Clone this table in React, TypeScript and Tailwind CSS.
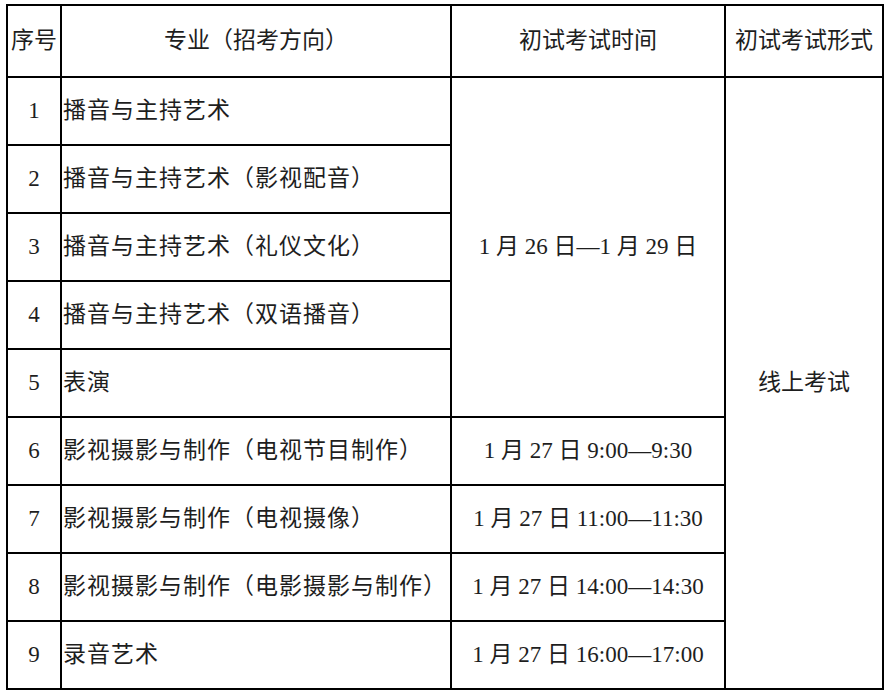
const rows: { n: number; name: string; time?: string }[] = [
  { n: 1, name: "播音与主持艺术" },
  { n: 2, name: "播音与主持艺术（影视配音）" },
  { n: 3, name: "播音与主持艺术（礼仪文化）" },
  { n: 4, name: "播音与主持艺术（双语播音）" },
  { n: 5, name: "表演" },
  { n: 6, name: "影视摄影与制作（电视节目制作）", time: "1 月 27 日 9:00—9:30" },
  { n: 7, name: "影视摄影与制作（电视摄像）", time: "1 月 27 日 11:00—11:30" },
  { n: 8, name: "影视摄影与制作（电影摄影与制作）", time: "1 月 27 日 14:00—14:30" },
  { n: 9, name: "录音艺术", time: "1 月 27 日 16:00—17:00" },
];

export default function App() {
  return (
    <div className="h-[696px] w-[887px] bg-white pl-[6px] pt-[4px] font-['Liberation_Serif','Noto_Sans_CJK_SC',serif] text-[#1e1e1e]">
      <table className="w-[876px] table-fixed border-collapse">
        <colgroup>
          <col className="w-[54px]" />
          <col className="w-[390px]" />
          <col className="w-[274px]" />
          <col className="w-[158px]" />
        </colgroup>
        <thead>
          <tr className="h-[72px] text-[23px]">
            <th className="border-2 border-black p-0 font-normal">序号</th>
            <th className="border-2 border-black p-0 font-normal">专业（招考方向）</th>
            <th className="border-2 border-black p-0 font-normal">初试考试时间</th>
            <th className="border-2 border-black p-0 font-normal">初试考试形式</th>
          </tr>
        </thead>
        <tbody>
          {rows.map((r, i) => (
            <tr key={r.n} className="h-[68px] text-[23px]">
              <td className="border-2 border-black p-0 pt-[1px] text-center">{r.n}</td>
              <td className="border-2 border-black pb-0 pt-[1px] pl-[1px] pr-0 tracking-[1px] whitespace-nowrap">{r.name}</td>
              {i === 0 && (
                <td rowSpan={5} className="border-2 border-black p-0 text-center">
                  1 月 26 日—1 月 29 日
                </td>
              )}
              {r.time && <td className="border-2 border-black p-0 pt-[1px] text-center">{r.time}</td>}
              {i === 0 && (
                <td rowSpan={9} className="border-2 border-black p-0 text-center">
                  线上考试
                </td>
              )}
            </tr>
          ))}
        </tbody>
      </table>
    </div>
  );
}
